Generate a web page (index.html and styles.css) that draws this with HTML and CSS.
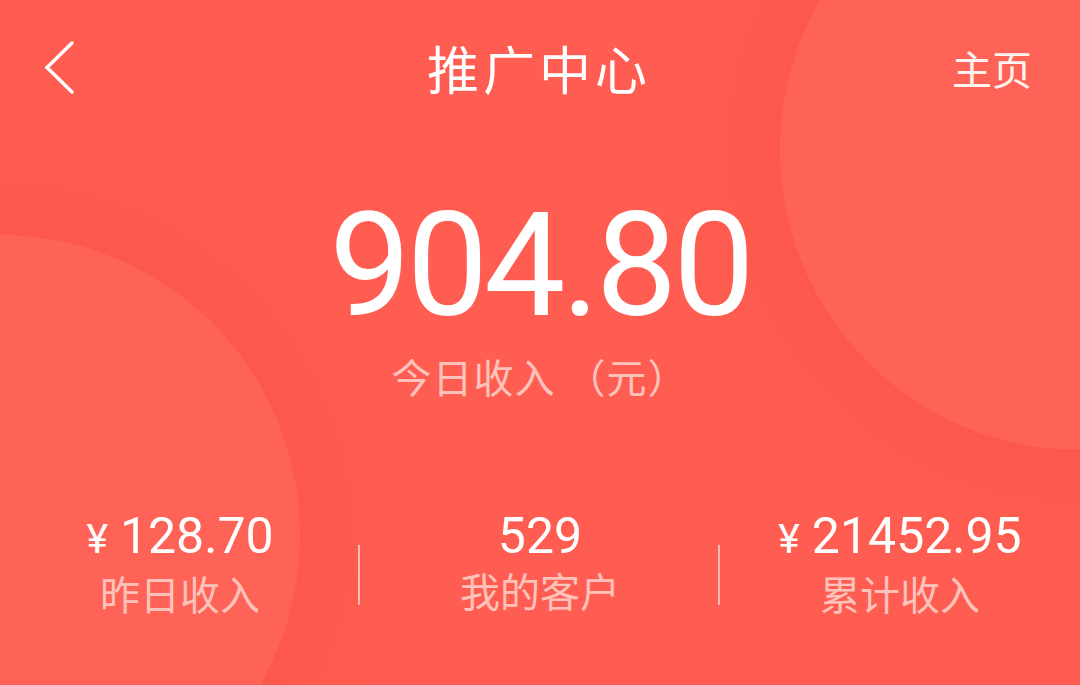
FILE: index.html
```html
<!DOCTYPE html>
<html lang="zh">
<head>
<meta charset="utf-8">
<title>推广中心</title>
<link rel="stylesheet" href="styles.css">
</head>
<body>
<div class="page">
  <div class="circle circle-tr"></div>
  <div class="circle circle-bl"></div>
  <div class="content">
    <header class="topbar">
      <span class="back">
        <svg width="34" height="56" viewBox="0 0 34 56"><path d="M30 3 L5 27.5 L30 52" fill="none" stroke="#fff" stroke-width="3.4" stroke-linecap="round" stroke-linejoin="miter"/></svg>
      </span>
      <h1 class="title">推广中心</h1>
      <span class="home">主页</span>
    </header>
    <section class="hero">
      <div class="amount">904.80</div>
      <div class="amount-label">今日收入 （元）</div>
    </section>
    <section class="stats">
      <div class="stat">
        <div class="stat-value"><span class="yen">¥</span>128.70</div>
        <div class="stat-label">昨日收入</div>
      </div>
      <div class="stat with-divider">
        <div class="stat-value">529</div>
        <div class="stat-label">我的客户</div>
      </div>
      <div class="stat with-divider">
        <div class="stat-value"><span class="yen">¥</span>21452.95</div>
        <div class="stat-label">累计收入</div>
      </div>
    </section>
  </div>
</div>
</body>
</html>
```

FILE: styles.css
```css
html, body {
  margin: 0;
  padding: 0;
}
body {
  width: 1080px;
  height: 685px;
  overflow: hidden;
  font-family: Roboto, "Noto Sans CJK SC", sans-serif;
  color: #fff;
}
.page {
  position: relative;
  width: 1080px;
  height: 685px;
  background: #ff5d51;
  overflow: hidden;
}
.circle {
  position: absolute;
  width: 600px;
  height: 600px;
  border-radius: 50%;
  background: #ff6358;
  box-shadow: 0 0 70px 30px rgba(230, 60, 45, 0.16);
}
.circle-tr {
  left: 780px;
  top: -150px;
}
.circle-bl {
  left: -300px;
  top: 235px;
}
.content {
  position: relative;
  display: flex;
  flex-direction: column;
  height: 100%;
}
.topbar {
  height: 136px;
  display: flex;
  align-items: center;
  justify-content: space-between;
  padding: 0 48px 0 42px;
}
.back {
  width: 130px;
  display: flex;
  align-items: center;
}
.back svg { display: block; }
.title {
  margin: 0;
  font-weight: 400;
  font-size: 52px;
  line-height: 1;
  letter-spacing: 4px;
  margin-right: -4px;
  font-family: "Noto Sans CJK SC", sans-serif;
}
.home {
  width: 130px;
  text-align: right;
  font-size: 40px;
  line-height: 1;
  font-family: "Noto Sans CJK SC", sans-serif;
  color: #fff3f0;
}
.hero {
  display: flex;
  flex-direction: column;
  align-items: center;
  margin-top: 57px;
}
.amount {
  font-size: 145px;
  line-height: 145px;
  letter-spacing: -4px;
  font-family: Roboto, sans-serif;
}
.amount-label {
  margin-top: 18px;
  font-size: 40px;
  line-height: 1;
  letter-spacing: 1px;
  color: #fdc3bb;
  font-family: "Noto Sans CJK SC", sans-serif;
}
.stats {
  display: grid;
  grid-template-columns: repeat(3, 1fr);
  margin-top: 115px;
}
.stat {
  position: relative;
  display: flex;
  flex-direction: column;
  align-items: center;
}
.with-divider::before {
  content: "";
  position: absolute;
  left: -2px;
  top: 34px;
  width: 2px;
  height: 60px;
  background: rgba(255, 220, 215, 0.75);
}
.stat-value {
  font-size: 50px;
  line-height: 50px;
  font-family: Roboto, sans-serif;
}
.yen {
  margin-right: 12px;
  font-size: 41px;
}
.stat-label {
  margin-top: 9px;
  font-size: 40px;
  line-height: 1;
  color: #fdc3bb;
  font-family: "Noto Sans CJK SC", sans-serif;
}
```
